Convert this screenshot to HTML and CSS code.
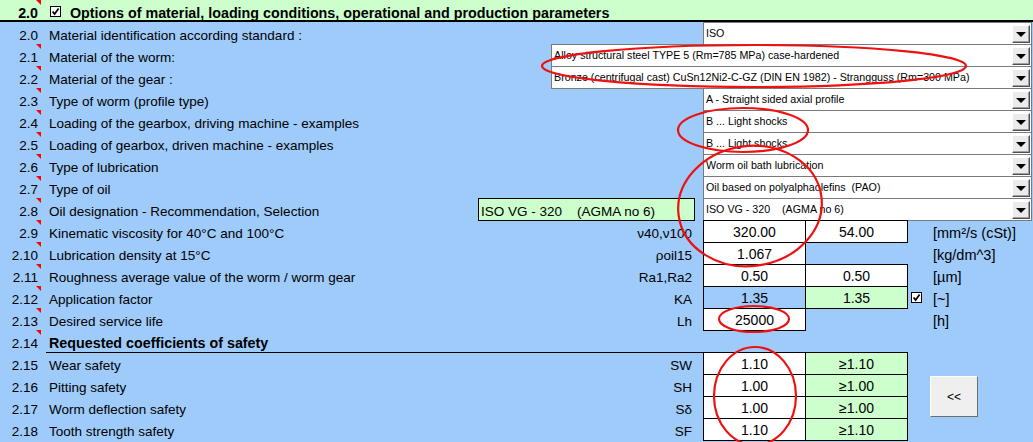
FILE: index.html
```html
<!DOCTYPE html>
<html>
<head>
  <meta charset="UTF-8">
  <title>Options of material, loading conditions</title>
  <link rel="stylesheet" href="styles.css">
</head>
<body>
  <div class="sheet">
    <div class="head">
      <span class="num mark">2.0</span>
      <svg class="box" viewBox="0 0 11 11"><rect x="0.5" y="0.5" width="10" height="10" fill="#fff" stroke="#000"/><path d="M2.6 5.4 L4.6 8 L8.6 2.6" fill="none" stroke="#000" stroke-width="1.7"/></svg>
      <span class="title">Options of material, loading conditions, operational and production parameters</span>
    </div>

    <div class="row">
      <span class="num">2.0</span>
      <span class="label">Material identification according standard :</span>
      <div class="combo"><span class="txt">ISO</span><i class="arrow"></i></div>
    </div>
    <div class="row">
      <span class="num mark">2.1</span>
      <span class="label">Material of the worm:</span>
      <div class="combo wide"><span class="txt">Alloy structural steel TYPE 5 (Rm=785 MPa) case-hardened</span><i class="arrow"></i></div>
    </div>
    <div class="row">
      <span class="num mark">2.2</span>
      <span class="label">Material of the gear :</span>
      <div class="combo wide"><span class="txt">Bronze (centrifugal cast) CuSn12Ni2-C-GZ (DIN EN 1982) - Strangguss (Rm=300 MPa)</span><i class="arrow"></i></div>
    </div>
    <div class="row">
      <span class="num mark">2.3</span>
      <span class="label">Type of worm (profile type)</span>
      <div class="combo"><span class="txt">A - Straight sided axial profile</span><i class="arrow"></i></div>
    </div>
    <div class="row">
      <span class="num mark">2.4</span>
      <span class="label">Loading of the gearbox, driving machine - examples</span>
      <div class="combo"><span class="txt">B ... Light shocks</span><i class="arrow"></i></div>
    </div>
    <div class="row">
      <span class="num mark">2.5</span>
      <span class="label">Loading of gearbox, driven machine - examples</span>
      <div class="combo"><span class="txt">B ... Light shocks</span><i class="arrow"></i></div>
    </div>
    <div class="row">
      <span class="num mark">2.6</span>
      <span class="label">Type of lubrication</span>
      <div class="combo"><span class="txt">Worm oil bath lubrication</span><i class="arrow"></i></div>
    </div>
    <div class="row">
      <span class="num mark">2.7</span>
      <span class="label">Type of oil</span>
      <div class="combo"><span class="txt">Oil based on polyalphaolefins  (PAO)</span><i class="arrow"></i></div>
    </div>
    <div class="row">
      <span class="num mark">2.8</span>
      <span class="label">Oil designation - Recommendation, Selection</span>
      <span class="pick">ISO VG - 320    (AGMA no 6)</span>
      <div class="combo"><span class="txt">ISO VG - 320    (AGMA no 6)</span><i class="arrow"></i></div>
    </div>
    <div class="row">
      <span class="num mark">2.9</span>
      <span class="label">Kinematic viscosity for 40°C and 100°C</span>
      <span class="sym">ν40,ν100</span>
      <span class="cell v1">320.00</span>
      <span class="cell v2">54.00</span>
      <span class="unit">[mm²/s (cSt)]</span>
    </div>
    <div class="row">
      <span class="num mark">2.10</span>
      <span class="label">Lubrication density at 15°C</span>
      <span class="sym">ρoil15</span>
      <span class="cell v1">1.067</span>
      <span class="unit">[kg/dm^3]</span>
    </div>
    <div class="row">
      <span class="num mark">2.11</span>
      <span class="label">Roughness average value of the worm / worm gear</span>
      <span class="sym">Ra1,Ra2</span>
      <span class="cell v1">0.50</span>
      <span class="cell v2">0.50</span>
      <span class="unit">[µm]</span>
    </div>
    <div class="row">
      <span class="num mark">2.12</span>
      <span class="label">Application factor</span>
      <span class="sym">KA</span>
      <span class="cell v1 clear">1.35</span>
      <span class="cell v2 green">1.35</span>
      <svg class="box tick" viewBox="0 0 11 11"><rect x="0.5" y="0.5" width="10" height="10" fill="#fff" stroke="#000"/><path d="M2.6 5.4 L4.6 8 L8.6 2.6" fill="none" stroke="#000" stroke-width="1.7"/></svg>
      <span class="unit">[~]</span>
    </div>
    <div class="row">
      <span class="num mark">2.13</span>
      <span class="label">Desired service life</span>
      <span class="sym">Lh</span>
      <span class="cell v1">25000</span>
      <span class="unit">[h]</span>
    </div>
    <div class="row">
      <span class="num mark">2.14</span>
      <span class="label section">Requested coefficients of safety</span>
    </div>
    <div class="row">
      <span class="num">2.15</span>
      <span class="label">Wear safety</span>
      <span class="sym">SW</span>
      <span class="cell v1">1.10</span>
      <span class="cell v2 green">≥1.10</span>
    </div>
    <div class="row">
      <span class="num">2.16</span>
      <span class="label">Pitting safety</span>
      <span class="sym">SH</span>
      <span class="cell v1">1.00</span>
      <span class="cell v2 green">≥1.00</span>
      <button class="back">&lt;&lt;</button>
    </div>
    <div class="row">
      <span class="num">2.17</span>
      <span class="label">Worm deflection safety</span>
      <span class="sym">Sδ</span>
      <span class="cell v1">1.00</span>
      <span class="cell v2 green">≥1.00</span>
    </div>
    <div class="row">
      <span class="num">2.18</span>
      <span class="label">Tooth strength safety</span>
      <span class="sym">SF</span>
      <span class="cell v1">1.10</span>
      <span class="cell v2 green">≥1.10</span>
    </div>

    <!-- red hand-drawn annotations -->
    <svg class="marks" viewBox="0 0 1033 442">
      <g fill="none" stroke="#ee1111" stroke-width="2.2">
        <ellipse cx="754" cy="66" rx="212" ry="21"/>
        <ellipse cx="743" cy="130" rx="65" ry="22"/>
        <ellipse cx="750" cy="206" rx="72" ry="60" transform="rotate(-8 750 206)"/>
        <ellipse cx="754" cy="319" rx="35" ry="13"/>
        <ellipse cx="755" cy="396" rx="41" ry="49"/>
      </g>
    </svg>
  </div>
</body>
</html>
```

FILE: styles.css
```css
body {
  margin: 0;
  background: #9fcbfa;
  font-family: "Liberation Sans", Arial, sans-serif;
  font-size: 13.5px;
  color: #000;
}

.sheet {
  position: relative;
  width: 1033px;
  height: 442px;
  overflow: hidden;
}

/* title bar */
.head {
  position: relative;
  z-index: 1;
  display: flex;
  align-items: flex-end;
  height: 22px;
  box-sizing: border-box;
  border-bottom: 2px solid #000;
  background: #ccffcc;
  font-weight: bold;
  font-size: 14.3px;
  line-height: 13px;
}
.head .num {
  align-self: stretch;
  padding-bottom: 0;
}
.head .box {
  align-self: flex-start;
  margin: 6px 0 0 9px;
}
.title {
  margin-left: 9px;
  white-space: nowrap;
}

.box {
  display: block;
  width: 11px;
  height: 11px;
}

/* sheet rows */
.row {
  display: grid;
  grid-template-columns: 41px 437px 73px 143px 9px 102px 102px 18px 106px;
  grid-template-rows: 22px;
  line-height: 15px;
}

.num {
  position: relative;
  grid-column: 1;
  width: 41px;
  box-sizing: border-box;
  display: flex;
  align-items: flex-end;
  justify-content: flex-end;
  padding: 0 3px 1px 0;
}
.num.mark::after {
  content: "";
  position: absolute;
  top: 0;
  right: 0;
  border-top: 5px solid #ff0000;
  border-left: 5px solid transparent;
}

.label, .sym, .unit {
  display: flex;
  align-items: flex-end;
  padding-bottom: 1px;
  white-space: nowrap;
}
.label {
  grid-column: 2;
  padding-left: 8px;
}
.label.section {
  grid-column: 2 / 8;
  margin: 0 -1px -1px 5px;
  padding-left: 3px;
  border-bottom: 1px solid #000;
  font-weight: bold;
  font-size: 14.3px;
}
.sym {
  grid-column: 3 / 6;
  justify-content: flex-end;
  padding-right: 11px;
}
.unit {
  grid-column: 9;
  padding-left: 8px;
  font-size: 14.5px;
}

/* value cells */
.cell {
  display: flex;
  align-items: flex-end;
  justify-content: center;
  margin: 0 -1px -1px 0;
  padding-bottom: 2px;
  border: 1px solid #000;
  background: #fff;
  font-size: 14px;
}
.v1 { grid-column: 6; }
.v2 { grid-column: 7; }
.cell.clear { background: transparent; }
.cell.green { background: #ccffcc; }

.tick {
  grid-column: 8;
  margin: 6px 0 0 4px;
}

.pick {
  grid-column: 3 / 5;
  display: flex;
  align-items: flex-end;
  margin: 0 -1px -1px 0;
  padding: 0 0 1px 2px;
  border: 1px solid #000;
  background: #ccffcc;
  white-space: pre;
}

/* combo boxes */
.combo {
  grid-column: 6 / 10;
  display: flex;
  margin: 0 -1px -1px 0;
  border: 1px solid #7a7a7a;
  background: #fff;
  font-size: 10.7px;
  line-height: 21px;
}
.combo.wide {
  grid-column: 4 / 10;
}
.combo .txt {
  flex: 1;
  padding-left: 2px;
  white-space: pre;
  overflow: hidden;
}
.arrow {
  display: flex;
  align-items: center;
  justify-content: center;
  width: 18px;
  height: 18px;
  box-sizing: border-box;
  margin: 2px 1px 0 0;
  border: 1px solid;
  border-color: #fff #505050 #505050 #fff;
  box-shadow: inset -1px -1px 0 #a0a0a0;
  background: #ebebeb;
}
.arrow::before {
  content: "";
  border-left: 5px solid transparent;
  border-right: 5px solid transparent;
  border-top: 5px solid #000;
}

.back {
  grid-column: 9;
  align-self: start;
  width: 48px;
  height: 41px;
  margin: 2px 0 0 5px;
  padding: 0;
  border: 1px solid;
  border-color: #fff #6e6e6e #6e6e6e #fff;
  background: #efefef;
  font-family: "Liberation Sans", Arial, sans-serif;
  font-size: 12px;
  color: #000;
}

.marks {
  position: absolute;
  top: 0;
  left: 0;
  width: 1033px;
  height: 442px;
  pointer-events: none;
}
```
